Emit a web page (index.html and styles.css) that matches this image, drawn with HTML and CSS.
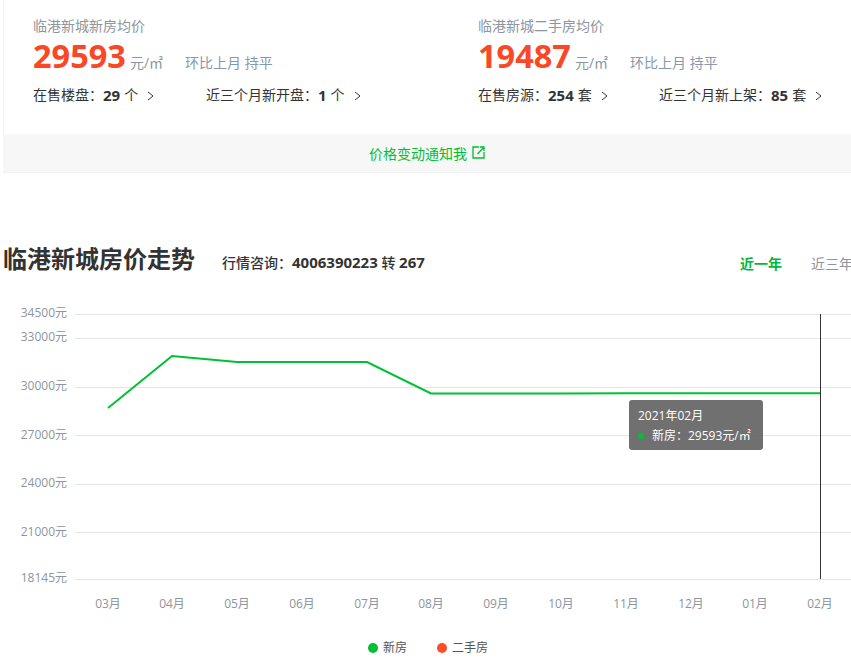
FILE: index.html
```html
<!DOCTYPE html>
<html lang="zh-CN">
<head>
<meta charset="utf-8">
<title>临港新城房价走势</title>
<link rel="stylesheet" href="styles.css">
</head>
<body>
<section class="summary">
  <div class="stats">
    <div class="stat stat-new">
      <div class="stat-title">临港新城新房均价</div>
      <div class="price-row"><span class="price">29593</span><span class="unit">元/㎡</span><span class="trend">环比上月 持平</span></div>
      <div class="links">
        <a class="link link-a">在售楼盘：<b>29</b> 个<svg class="chev" viewBox="0 0 7 10"><path d="M1 1l5 4-5 4"/></svg></a>
        <a class="link">近三个月新开盘：<b>1</b> 个<svg class="chev" viewBox="0 0 7 10"><path d="M1 1l5 4-5 4"/></svg></a>
      </div>
    </div>
    <div class="stat stat-old">
      <div class="stat-title">临港新城二手房均价</div>
      <div class="price-row"><span class="price">19487</span><span class="unit">元/㎡</span><span class="trend">环比上月 持平</span></div>
      <div class="links">
        <a class="link link-a">在售房源：<b>254</b> 套<svg class="chev" viewBox="0 0 7 10"><path d="M1 1l5 4-5 4"/></svg></a>
        <a class="link">近三个月新上架：<b>85</b> 套<svg class="chev" viewBox="0 0 7 10"><path d="M1 1l5 4-5 4"/></svg></a>
      </div>
    </div>
  </div>
  <div class="notify"><a class="notify-link">价格变动通知我<svg class="ext" viewBox="0 0 13 13"><path d="M7 1H1v11h11V6M8 1h4v4M12 1L5.500 8"/></svg></a></div>
</section>

<section class="trend-head">
  <h2 class="trend-title">临港新城房价走势</h2>
  <span class="hotline">行情咨询：<b>4006390223</b> 转 <b>267</b></span>
  <span class="tabs"><span class="tab tab-on">近一年</span><span class="tab">近三年</span></span>
</section>

<section class="chart">
  <svg class="chart-svg" width="851" height="365" viewBox="0 290 851 365">
    <g class="grid">
      <path d="M75 314.500H851M75 338.500H851M75 387.500H851M75 435.500H851M75 484.500H851M75 532.500H851M75 579.500H851"/>
    </g>
    <g class="ylabels">
      <text x="67" y="317">34500元</text>
      <text x="67" y="341">33000元</text>
      <text x="67" y="390">30000元</text>
      <text x="67" y="439">27000元</text>
      <text x="67" y="487">24000元</text>
      <text x="67" y="536">21000元</text>
      <text x="67" y="582">18145元</text>
    </g>
    <g class="xlabels">
      <text x="108" y="608">03月</text>
      <text x="172" y="608">04月</text>
      <text x="237" y="608">05月</text>
      <text x="302" y="608">06月</text>
      <text x="367" y="608">07月</text>
      <text x="431" y="608">08月</text>
      <text x="496" y="608">09月</text>
      <text x="561" y="608">10月</text>
      <text x="626" y="608">11月</text>
      <text x="691" y="608">12月</text>
      <text x="755" y="608">01月</text>
      <text x="820" y="608">02月</text>
    </g>
    <polyline class="series" points="108,408 172,356 237,362 302,362 367,362 431,393.500 496,393.500 561,393.500 626,393.300 691,393.300 755,393.200 820,393.200"/>
    <path class="cross" d="M820.500 314V579"/>
    <g class="legend">
      <circle class="dot-new" cx="373" cy="648" r="5"/>
      <text x="383" y="652">新房</text>
      <circle class="dot-old" cx="442" cy="648" r="5"/>
      <text x="452" y="652">二手房</text>
    </g>
  </svg>
  <div class="tooltip">
    <div class="tip-date">2021年02月</div>
    <div class="tip-row"><i class="tip-dot"></i>新房：29593元/㎡</div>
  </div>
</section>
</body>
</html>
```
FILE: styles.css
```css
* { box-sizing: border-box; }
html, body { margin: 0; padding: 0; }
body {
  width: 851px;
  height: 670px;
  overflow: hidden;
  background: #fff;
  color: #333;
  font-family: "Open Sans", "Noto Sans CJK SC", sans-serif;
}
a { color: inherit; text-decoration: none; }

.summary { margin-left: 3px; }
.stats {
  display: flex;
  height: 134px;
  border-left: 1px solid #f5f5f5;
}
.stat { padding-top: 16px; }
.stat-new { width: 445px; padding-left: 29px; }
.stat-old { flex: 1; padding-left: 29px; }
.stat-title {
  font-size: 14px;
  line-height: 20px;
  color: #8d959e;
}
.price-row {
  display: flex;
  align-items: baseline;
  height: 40px;
}
.price {
  font-size: 32.500px;
  line-height: 40px;
  font-weight: 700;
  color: #fa4725;
}
.unit {
  margin-left: 4px;
  font-size: 14px;
  color: #8d959e;
}
.trend {
  margin-left: 22px;
  font-size: 14px;
  color: #8799ac;
}
.links {
  display: flex;
  margin-top: 9px;
  font-size: 14px;
  line-height: 20px;
  color: #333;
}
.link { display: inline-flex; align-items: center; }
.link b { margin-right: 4px; font-size: 15px; font-weight: 700; }
.link-a { width: 173px; }
.stat-old .link-a { width: 181px; }
.chev {
  width: 7px;
  height: 10px;
  margin-left: 9px;
  margin-top: 2px;
  fill: none;
  stroke: #333;
  stroke-width: 1;
}
.notify {
  display: flex;
  justify-content: center;
  align-items: center;
  height: 39px;
  padding-bottom: 1px;
  background: #f7f7f7;
  border-bottom: 1px solid #f2f2f2;
}
.notify-link {
  display: inline-flex;
  align-items: center;
  font-size: 14px;
  color: #00c033;
}
.ext {
  width: 13px;
  height: 13px;
  margin-left: 5px;
  fill: none;
  stroke: #00c033;
  stroke-width: 1.300;
}

.trend-head {
  display: flex;
  align-items: center;
  height: 40px;
  margin-top: 66px;
  padding-left: 3px;
}
.trend-title {
  margin: 0;
  font-size: 24px;
  line-height: 40px;
  font-weight: 700;
  color: #333;
}
.hotline {
  margin-left: 27px;
  padding-top: 5px;
  font-size: 14px;
  font-weight: 500;
  color: #333;
}
.hotline b { font-size: 15px; font-weight: 700; }
.tabs {
  display: flex;
  gap: 29px;
  margin-left: auto;
  margin-right: -2px;
  padding-top: 7px;
  font-size: 14px;
  color: #8d959e;
}
.tab-on { color: #00b83a; font-weight: 700; }

.chart {
  position: relative;
  height: 365px;
  margin-top: 11px;
}
.chart-svg { display: block; }
.grid path { stroke: #e6e6e6; stroke-width: 1; fill: none; }
.ylabels text {
  font-size: 12px;
  fill: #8d959e;
  text-anchor: end;
}
.xlabels text {
  font-size: 12px;
  fill: #8d959e;
  text-anchor: middle;
}
.series { fill: none; stroke: #00c033; stroke-width: 2; }
.cross { stroke: #333; stroke-width: 1; fill: none; }
.legend text { font-size: 12px; fill: #555; }
.dot-new { fill: #00bf32; }
.dot-old { fill: #fb4d28; }

.tooltip {
  position: absolute;
  left: 629px;
  top: 110px;
  width: 134px;
  height: 50px;
  padding: 6px 9px;
  border-radius: 3px;
  background: rgba(88, 88, 88, 0.86);
  color: #fff;
  font-size: 12px;
  line-height: 20px;
}
.tip-row { display: flex; align-items: center; }
.tip-dot {
  width: 6px;
  height: 6px;
  margin-right: 8px;
  border-radius: 50%;
  background: #00c033;
}
```
